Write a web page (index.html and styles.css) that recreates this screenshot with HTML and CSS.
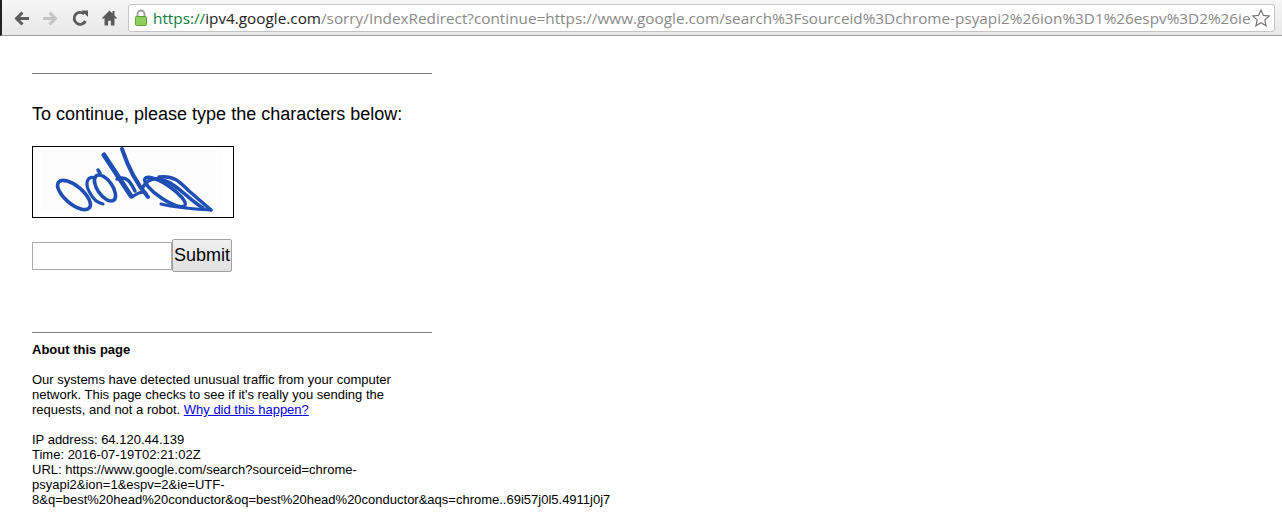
FILE: index.html
```html
<!DOCTYPE html>
<html lang="en">

<head>
  <title>https://ipv4.google.com/sorry/IndexRedirect</title>
  <link rel="stylesheet" href="styles.css">
</head>

<body>
  <div class="toolbar">
    <svg class="nav-icon" width="18" height="18" viewBox="0 0 18 18"><path d="M15 9.500H3M8.500 3.500 2.500 9.500l6 6" fill="none" stroke="#5c5c5c" stroke-width="3"/></svg>
    <svg class="nav-icon" width="18" height="18" viewBox="0 0 18 18"><path d="M0 9.500h12M6.500 3.500l6 6-6 6" fill="none" stroke="#c2c2c2" stroke-width="3"/></svg>
    <svg class="nav-icon" width="18" height="18" viewBox="0 0 18 18"><path d="M13.500 12A6 6 0 1 1 12.300 5" fill="none" stroke="#5a5a5a" stroke-width="2.800"/><path d="M9.500 1.500h6.500v6.500z" fill="#5a5a5a"/></svg>
    <svg class="nav-icon" width="18" height="18" viewBox="0 0 18 18"><path d="M8.500 1.500 1 9l1 1 1.500-1.200V16.500h3.600v-4.800h2.800v4.800h3.600V8.800L15 10l1-1-2.500-2.500V2h-2v2.500z" fill="#5a5a5a"/></svg>
    <div class="omnibox">
      <svg class="lock" width="14" height="18" viewBox="0 0 14 18"><path d="M3.500 8V5a3.500 3.500 0 0 1 7 0v3" fill="none" stroke="#9a9a9a" stroke-width="1.800"/><rect x="1.500" y="7.500" width="11" height="9" rx="1" fill="#8fce5f" stroke="#5f9e35"/></svg>
      <div class="url"><span class="scheme">https://</span><span class="host">ipv4.google.com</span><span class="path">/sorry/IndexRedirect?continue=https://www.google.com/search%3Fsourceid%3Dchrome-psyapi2%26ion%3D1%26espv%3D2%26ie%3DUTF-8</span></div>
      <svg class="star" width="20" height="20" viewBox="0 0 20 20"><path d="m10 2 2.400 5.400 5.800.6-4.400 3.900 1.300 5.800L10 14.700l-5.100 3 1.300-5.800L1.800 8l5.800-.6z" fill="#fff" stroke="#777" stroke-width="1.200"/></svg>
    </div>
  </div>

  <div class="page">
    <hr class="rule">
    <div class="prompt">To continue, please type the characters below:</div>

    <div class="captcha">
      <svg width="200" height="70" viewBox="0 0 200 70">
        <rect x="8" y="2" width="180" height="62" fill="#fdfdfd"/>
        <g fill="none" stroke="#1f4fb5" stroke-linecap="round">
          <ellipse cx="41" cy="48" rx="20" ry="9" transform="rotate(40 41 48)" stroke-width="3.600"/>
          <path d="M62 31c-9-3-10 7-5 15 3 6 8 10 13 11" stroke-width="3.200"/>
          <ellipse cx="72" cy="41" rx="15" ry="7.500" transform="rotate(55 72 41)" stroke-width="3.600"/>
          <path d="M65 23l2 3" stroke-width="3.500"/>
          <path d="M71 8l27 41" stroke-width="5"/>
          <path d="M84 32c10-4 14 4 18 12" stroke-width="3.500"/>
          <path d="M89 2c6 18 14 34 26 48" stroke-width="4"/>
          <path d="M99 50c6-4 10-6 14-4" stroke-width="3"/>
          <ellipse cx="132" cy="45" rx="24" ry="7" transform="rotate(34 132 45)" stroke-width="3.500"/>
          <path d="M110 40c6-10 14-9 20-7 14 4 24 18 40 28" stroke-width="3.500"/>
          <path d="M126 30c14-2 20 4 30 14l22 19" stroke-width="3.500"/>
          <path d="M128 57c16 4 32 5 50 6" stroke-width="3"/>
        </g>
      </svg>
    </div>

    <form class="captcha-form" onsubmit="return false">
      <input class="captcha-input" type="text">
      <button class="submit-btn">Submit</button>
    </form>

    <hr class="rule about-rule">
    <div class="about">
      <b>About this page</b>
      <p>Our systems have detected unusual traffic from your computer network. This page checks to see if it's really you sending the requests, and not a robot. <a href="#">Why did this happen?</a></p>
      <p>IP address: 64.120.44.139<br>Time: 2016-07-19T02:21:02Z<br>URL: https://www.google.com/search?sourceid=chrome-psyapi2&amp;ion=1&amp;espv=2&amp;ie=UTF-8&amp;q=best%20head%20conductor&amp;oq=best%20head%20conductor&amp;aqs=chrome..69i57j0l5.4911j0j7</p>
    </div>
  </div>
</body>

</html>
```

FILE: styles.css
```css
html, body {
  height: 100%;
}

body {
  margin: 0;
  overflow: hidden;
  background: #fff;
  color: #000;
  font-family: "Liberation Sans", Arial, sans-serif;
}

.toolbar {
  display: flex;
  align-items: center;
  height: 35px;
  padding-left: 12px;
  background: linear-gradient(#f6f6f6, #e8e8e8);
  border-left: 2px solid #222;
  border-bottom: 1px solid #a0a0a0;
}

.nav-icon {
  flex: none;
  margin-right: 11px;
}

.omnibox {
  display: flex;
  align-items: center;
  flex: 1;
  min-width: 0;
  height: 26px;
  margin: 0 7px 0 -2px;
  padding-left: 5px;
  background: #fff;
  border: 1px solid #c4c4c4;
  border-radius: 3px;
}

.lock {
  flex: none;
  margin-right: 5px;
}

.url {
  flex: 1;
  overflow: hidden;
  white-space: nowrap;
  font-family: "Open Sans", sans-serif;
  font-size: 15.3px;
  color: #8a8a8a;
}

.scheme {
  color: #0b8043;
}

.host {
  color: #222;
}

.star {
  flex: none;
  margin-right: 3px;
}

.page {
  width: 400px;
  margin-left: 32px;
}

.rule {
  height: 0;
  margin: 37px 0 0;
  border: 0;
  border-top: 1px solid #808080;
}

.prompt {
  margin-top: 30px;
  font-size: 18px;
  line-height: 21px;
}

.captcha {
  width: 200px;
  height: 70px;
  margin-top: 21px;
  border: 1px solid #000;
}

.captcha svg {
  display: block;
}

.captcha-form {
  display: flex;
  align-items: center;
  margin-top: 21px;
}

.captcha-input {
  box-sizing: border-box;
  width: 140px;
  height: 28px;
  margin: 1px 0 0;
  padding: 1px 2px;
  background: #fff;
  border: 1px solid #a9a9a9;
}

.submit-btn {
  box-sizing: border-box;
  width: 60px;
  height: 33px;
  padding: 0;
  font-family: "Liberation Sans", Arial, sans-serif;
  font-size: 18px;
  color: #000;
  background: linear-gradient(#f0f0f0, #e0e0e0);
  border: 1px solid #a0a0a0;
  border-radius: 2px;
}

.about-rule {
  margin-top: 60px;
}

.about {
  margin-top: 9px;
  font-size: 13px;
  line-height: 15px;
}

.about b {
  display: block;
}

.about p {
  margin: 15px 0 0;
}
```
